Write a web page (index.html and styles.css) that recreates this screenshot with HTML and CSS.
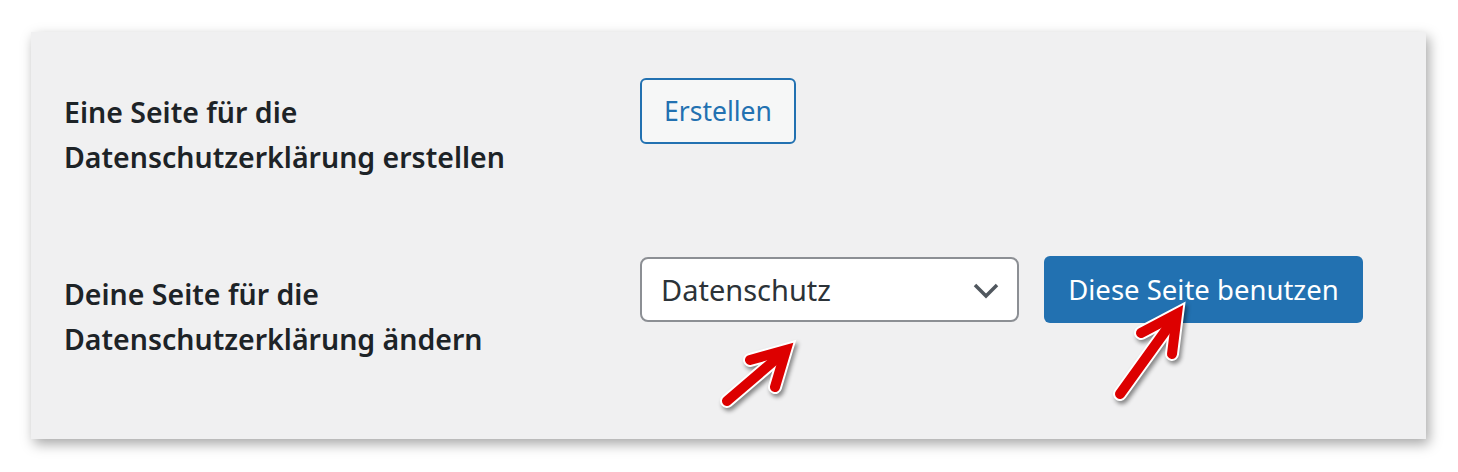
FILE: index.html
```html
<!DOCTYPE html>
<html>
	<head>
		<meta charset="utf-8">
		<title>Datenschutz</title>
		<link rel="stylesheet" href="styles.css">
	</head>
<body>

<div id="panel">
	<div class="row first">
		<div class="label">Eine Seite für die<br/>Datenschutzerklärung erstellen</div>
		<div class="field">
			<button class="btn secondary">Erstellen</button>
		</div>
	</div>
	<div class="row second">
		<div class="label">Deine Seite für die<br/>Datenschutzerklärung ändern</div>
		<div class="field">
			<div class="select">
				<span>Datenschutz</span>
				<svg width="26" height="16" viewBox="0 0 26 16"><polyline points="2,2 13,13 24,2" fill="none" stroke="#50575e" stroke-width="3.5"/></svg>
			</div>
			<button class="btn primary">Diese Seite benutzen</button>
		</div>
	</div>
</div>

<svg id="arrows" width="1458" height="472" viewBox="0 0 1458 472">
	<g class="arrow">
		<g fill="none" stroke="#fff" stroke-width="14">
			<line x1="727" y1="401" x2="782" y2="354" stroke-linecap="round"/>
			<polyline points="750,360 786,350 775,387" stroke-linecap="round" stroke-linejoin="miter"/>
		</g>
		<g fill="none" stroke="#dd0000" stroke-width="10">
			<line x1="727" y1="401" x2="782" y2="354" stroke-linecap="round"/>
			<polyline points="750,360 786,350 775,387" stroke-linecap="round" stroke-linejoin="miter"/>
		</g>
	</g>
	<g class="arrow">
		<g fill="none" stroke="#fff" stroke-width="14">
			<line x1="1120" y1="394" x2="1174" y2="319" stroke-linecap="round"/>
			<polyline points="1141,333 1177,314 1172,354" stroke-linecap="round" stroke-linejoin="miter"/>
		</g>
		<g fill="none" stroke="#dd0000" stroke-width="10">
			<line x1="1120" y1="394" x2="1174" y2="319" stroke-linecap="round"/>
			<polyline points="1141,333 1177,314 1172,354" stroke-linecap="round" stroke-linejoin="miter"/>
		</g>
	</g>
</svg>

</body>
</html>
```

FILE: styles.css
```css
body {
	margin:0px;
	background-color:#ffffff;
	font-family:"Noto Sans", "Open Sans", sans-serif;
	position:relative;
	height:472px;
	overflow:hidden;
}

#panel {
	margin-left:31px;
	margin-top:32px;
	width:1395px;
	box-sizing:border-box;
	padding:46px 0px 77px 33px;

	background-color:#f0f0f1;
	box-shadow:3px 5px 12px rgba(0, 0, 0, .35);
}

.row {
	display:flex;
	align-items:flex-start;
}
.row.second {
	margin-top:76px;
}

.label {
	width:576px;
	flex-shrink:0;

	font-size:28.5px;
	font-weight:600;
	line-height:45px;
	color:#1d2327;
}
.first .label {
	padding-top:12px;
}
.second .label {
	padding-top:16px;
}

.field {
	display:flex;
	gap:25px;
}

.btn {
	box-sizing:border-box;
	font-family:inherit;
	font-size:27.5px;
	border-radius:6px;
	cursor:pointer;
}
.btn.secondary {
	width:156px;
	height:66px;
	padding:0px;
	font-size:26.5px;

	color:#2271b1;
	background-color:#f6f7f7;
	border:2px solid #2271b1;
}
.btn.primary {
	width:319px;
	height:67px;
	padding:0px;

	color:#ffffff;
	background-color:#2271b1;
	border:none;
}

.select {
	box-sizing:border-box;
	width:379px;
	height:65px;
	margin-top:1px;
	padding:0px 18px 0px 19px;
	display:flex;
	align-items:center;
	justify-content:space-between;

	font-size:29px;
	color:#2c3338;
	background-color:#ffffff;
	border:2px solid #8c8f94;
	border-radius:8px;
}
.select svg {
	margin-top:2px;
}

#arrows {
	position:absolute;
	left:0px;
	top:0px;
	pointer-events:none;
}
.arrow {
	filter:drop-shadow(2px 3px 2px rgba(0, 0, 0, .45));
}
```
